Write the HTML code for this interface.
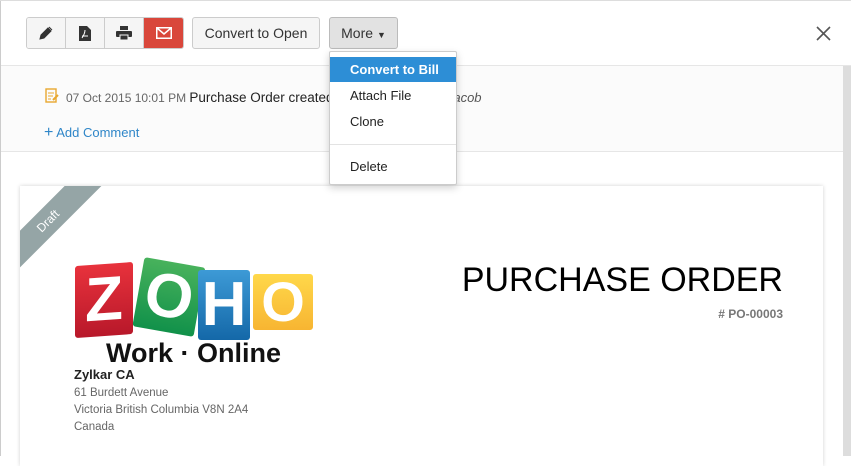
<!DOCTYPE html>
<html><head><meta charset="utf-8"><style>
*{box-sizing:border-box;margin:0;padding:0}
body{width:851px;height:456px;overflow:hidden;font-family:"Liberation Sans",sans-serif;background:#fff;position:relative}
.abs{position:absolute}
.top{left:0;top:0;width:851px;height:66px;background:#fff;border-bottom:1px solid #e6e6e6}
.grp{left:26px;top:17px;height:32px;display:flex;border:1px solid #ccc;border-radius:3px;overflow:hidden}
.grp div{width:39px;height:30px;background:#f5f5f5;border-right:1px solid #ccc;display:flex;align-items:center;justify-content:center}
.grp div:last-child{border-right:0;background:#d9473b}
.btn{top:17px;height:32px;border:1px solid #ccc;border-radius:3px;background:#f5f5f5;font-size:14px;color:#333;line-height:30px;text-align:center}
.act{left:0;top:66px;width:843px;height:86px;background:#fbfbfb;border-bottom:1px solid #e6e6e6}
.menu{left:329px;top:51px;width:128px;height:134px;background:#fff;border:1px solid #ccc;border-radius:2px;box-shadow:0 3px 8px rgba(0,0,0,.18);font-size:13px;color:#222}
.menu div{position:absolute;left:0;width:126px;padding-left:20px;height:25px;line-height:25px}
.card{left:20px;top:186px;width:803px;height:280px;background:#fff;box-shadow:0 0 4px rgba(0,0,0,.18);overflow:hidden}
.blk{position:absolute;color:#fff;font-weight:bold;font-size:62px;text-align:center;border-radius:3px}
</style></head><body>
<div class="abs top"></div>
<div class="abs grp">
<div><svg width="14" height="14" viewBox="0 0 14 14"><path d="M1 13l1-4 7-7 3 3-7 7z M10 1l3 3" fill="#333" stroke="#333" stroke-width="1"/></svg></div>
<div><svg width="12" height="15" viewBox="0 0 12 15"><path d="M0 0h8l4 4v11H0z" fill="#333"/><path d="M3 12c2-3 3-6 3-8M3 10h6" stroke="#fff" stroke-width="1" fill="none"/></svg></div>
<div><svg width="16" height="14" viewBox="0 0 16 14"><rect x="4" y="0" width="8" height="4" fill="#333"/><rect x="0" y="5" width="16" height="6" rx="1" fill="#333"/><rect x="4" y="9" width="8" height="5" fill="#333" stroke="#f5f5f5"/></svg></div>
<div><svg width="16" height="12" viewBox="0 0 16 12"><rect x=".75" y=".75" width="14.5" height="10.5" fill="none" stroke="#fff" stroke-width="1.5"/><path d="M1 1l7 6 7-6" fill="none" stroke="#fff" stroke-width="1.5"/></svg></div>
</div>
<div class="abs btn" style="left:192px;width:128px">Convert to Open</div>
<div class="abs btn" style="left:329px;width:69px;background:#e2e2e2;border-color:#bbb">More <span style="font-size:9px">▼</span></div>
<svg class="abs" style="left:816px;top:26px" width="15" height="15"><path d="M1 1l13 13M14 1L1 14" stroke="#555" stroke-width="1.6"/></svg>
<div class="abs act"></div>
<svg class="abs" style="left:45px;top:88px" width="14" height="15" viewBox="0 0 14 15"><rect x="1" y="1" width="10" height="13" fill="none" stroke="#e8a830" stroke-width="1.4"/><path d="M3 5h6M3 8h5M3 11h3" stroke="#e8a830"/><path d="M8 12l5-5" stroke="#e8a830" stroke-width="2"/></svg>
<div class="abs" style="left:66px;top:90px;font-size:12px;color:#666;white-space:nowrap">07 Oct 2015 10:01 PM <span style="font-size:13.5px;color:#222">Purchase Order created</span> <span style="margin-left:110px;font-style:italic;color:#555;font-size:13px">Jacob</span></div>
<div class="abs" style="left:44px;top:124px;font-size:13px;color:#2f86c8"><span style="font-size:16px">+</span> Add Comment</div>
<div class="abs" style="left:843px;top:66px;width:8px;height:390px;background:#ddd"></div>
<div class="abs card">
<div class="abs" style="left:-52px;top:22px;width:160px;height:26px;background:#95a5a6;transform:rotate(-45deg);color:#fff;font-size:12px;line-height:26px;text-align:center">Draft</div>
<div class="blk" style="left:55px;top:78px;width:58px;height:72px;background:linear-gradient(#e8323c,#b8182a);transform:skewY(-4deg);line-height:72px">Z</div>
<div class="blk" style="left:118px;top:76px;width:62px;height:70px;background:linear-gradient(#48b25c,#11914a);transform:rotate(10deg);line-height:70px">O</div>
<div class="blk" style="left:178px;top:84px;width:52px;height:70px;background:linear-gradient(#3d9ad6,#1468a8);line-height:70px">H</div>
<div class="blk" style="left:233px;top:88px;width:60px;height:56px;background:linear-gradient(#ffd84a,#f7b532);line-height:56px;font-size:56px">O</div>
<div class="abs" style="left:86px;top:152px;font-size:27px;font-weight:bold;color:#111;white-space:nowrap">Work · Online</div>
<div class="abs" style="left:54px;top:181px;font-size:13px;font-weight:bold;color:#222">Zylkar CA</div>
<div class="abs" style="left:54px;top:199px;font-size:11.5px;color:#666;line-height:17px">61 Burdett Avenue<br>Victoria British Columbia V8N 2A4<br>Canada</div>
<div class="abs" style="right:40px;top:75px;font-size:34px;color:#000;white-space:nowrap">PURCHASE ORDER</div>
<div class="abs" style="right:40px;top:121px;font-size:12px;font-weight:bold;color:#777"># PO-00003</div>
</div>
<div class="abs" style="left:0;top:0;width:1px;height:456px;background:#ccc"></div>
<div class="abs" style="left:0;top:0;width:851px;height:1px;background:#ddd"></div>
<div class="abs menu">
<div style="top:5px;background:#2d8ed6;color:#fff;font-weight:bold">Convert to Bill</div>
<div style="top:31px">Attach File</div>
<div style="top:57px">Clone</div>
<div style="top:92px;height:1px;padding:0;background:#e3e3e3"></div>
<div style="top:102px">Delete</div>
</div>
</body></html>
